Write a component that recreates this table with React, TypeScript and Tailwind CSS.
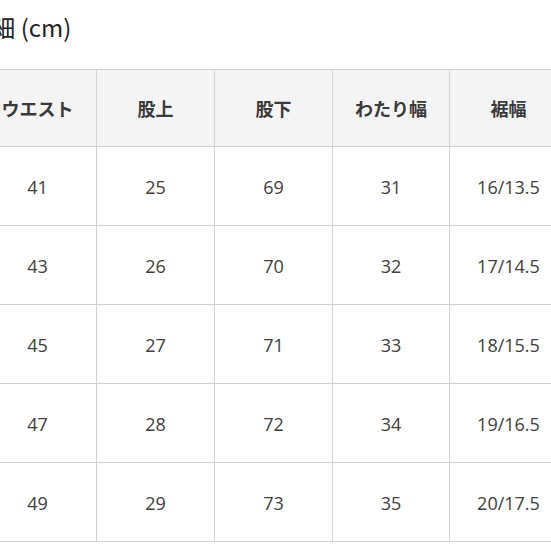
const headers = ['ウエスト', '股上', '股下', 'わたり幅', '裾幅'];

const rows = [
  ['41', '25', '69', '31', '16/13.5'],
  ['43', '26', '70', '32', '17/14.5'],
  ['45', '27', '71', '33', '18/15.5'],
  ['47', '28', '72', '34', '19/16.5'],
  ['49', '29', '73', '35', '20/17.5'],
];

const widths = ['w-[118px]', 'w-[118px]', 'w-[118px]', 'w-[117px]', 'w-[118px]'];

const App = () => {
  return (
    <div
      className="w-[551px] h-[551px] overflow-hidden bg-white text-[#333]"
      style={{ fontFamily: '"Noto Sans CJK JP", "Noto Sans", sans-serif' }}
    >
      {/* タイトル */}
      <div className="h-[69px] pt-[11px] ml-[-104px] whitespace-nowrap text-[24px] leading-[32px] text-[#222]">
        サイズ詳細 (cm)
      </div>

      {/* サイズ表 */}
      <div className="ml-[-22px] w-max border-t border-l border-[#d2d2d2]">
        <div className="flex h-[77px] bg-[#f4f4f4]">
          {headers.map((h, i) => (
            <div
              key={h}
              className={`${widths[i]} flex items-center justify-center border-r border-b border-[#d2d2d2] text-[18px] font-bold text-[#3a3a3a]`}
            >
              {h}
            </div>
          ))}
        </div>
        {rows.map((row, r) => (
          <div key={r} className="flex h-[79px]">
            {row.map((v, i) => (
              <div
                key={i}
                className={`${widths[i]} flex items-center justify-center pt-[3px] border-r border-b border-[#d2d2d2] text-[18px] text-[#404040]`}
                style={{ fontFamily: '"Open Sans", "Noto Sans CJK JP", sans-serif' }}
              >
                {v}
              </div>
            ))}
          </div>
        ))}
      </div>
    </div>
  );
};

export default App;
